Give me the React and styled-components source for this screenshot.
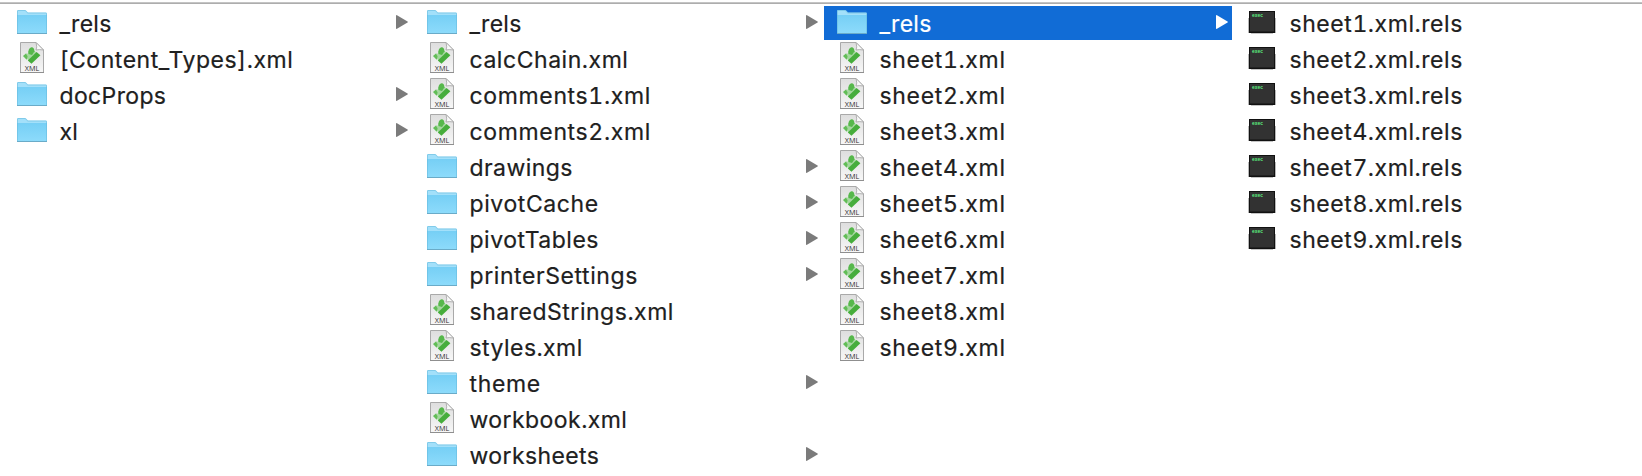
import React from "react";
import styled, { createGlobalStyle } from "styled-components";

const GlobalStyle = createGlobalStyle`
  body { margin: 0; background: #fff; overflow: hidden; }
`;

const Browser = styled.main`
  box-sizing: border-box;
  width: 1642px;
  height: 476px;
  padding: 2px 0 0;
  overflow: hidden;
  background: #fff;
  font-family: Inter, "Liberation Sans", sans-serif;
`;

const Definitions = styled.svg`
  display: block;
`;

const TopEdge = styled.div`
  height: 2px;
  background: linear-gradient(#c4c4c4 50%, #adadad 50%);
`;

const Columns = styled.div`
  display: flex;
  gap: 2px;
  padding: 2px 0 0 4px;
`;

const Column = styled.ul`
  display: flex;
  flex: 0 0 408px;
  flex-direction: column;
  gap: 2px;
  margin: 0;
  padding: 0;
  list-style: none;
`;

const Row = styled.li`
  box-sizing: border-box;
  display: flex;
  align-items: center;
  height: 34px;
  padding: 0 4px 0 13px;
  color: ${(p) => (p.$selected ? "#fff" : "#202020")};
  background: ${(p) => (p.$selected ? "#116cd6" : "transparent")};
`;

const Icon = styled.svg`
  flex: none;
  width: 30px;
  height: 34px;
  overflow: visible;
`;

const Name = styled.span`
  flex: 1;
  padding: 2px 0 0 12.5px;
  font-size: 23px;
  font-variant-numeric: tabular-nums;
  line-height: 34px;
  letter-spacing: ${(p) => p.$tracking}px;
  -webkit-text-stroke: 0.2px currentColor;
  white-space: nowrap;
`;

const Arrow = styled.svg`
  flex: none;
  width: 12px;
  height: 14px;
  margin-bottom: 2px;
  fill: ${(p) => (p.$selected ? "#fff" : "#7b7b7b")};
`;

const FolderIcon = () => (
  <Icon viewBox="0 0 30 34">
    <path d="M0 28V5.2Q0 4 1.2 4H8q.8 0 1.400.7L11 6.500h17.800Q30 6.500 30 7.700V28Z" fill="#a3e0fa" />
    <path d="M0 9h30v18.500H0Z" fill="url(#folderFace)" />
    <path d="M.5 28V5Q.5 4.500 1 4.500h7.200L10.800 7H29q.5 0 .5.5V28" fill="none" stroke="#66b9dd" strokeOpacity=".55" />
    <path d="M0 27.500h30" stroke="#6aabc8" />
  </Icon>
);

const XmlIcon = () => (
  <Icon viewBox="0 0 30 34">
    <path d="M3.500 .5H19l7.500 7.500v22.500h-23Z" fill="url(#paper)" stroke="#a9a9a9" />
    <path d="M3 30.500h24" stroke="#8f8f8f" />
    <path d="M19 .5q1.500 5 0 7.500 3-.8 7.500 0Z" fill="#fafafa" stroke="#a2a2a2" strokeWidth=".8" />
    <path d="m8.500 15 3-5 6-1 2.500 2-8 8Z" fill="#a5d79f" />
    <path d="m10.800 18.600 8.800-8.500 3.800 3.200-8.900 8.500Z" fill="#46ad3c" />
    <path d="M11.300 9.500q.8-3.900 3.200-4.200 2.600-.2 3 4l-2.500 3.600-3.500-.8Z" fill="#56b84b" />
    <path d="m6 14 3.200-2.800 1.400 3.600-1 3Z" fill="#62bd57" />
    <text x="15" y="28.600" textAnchor="middle" textLength="14.500" lengthAdjust="spacingAndGlyphs" fontFamily="Open Sans, sans-serif" fontSize="7.500" fill="#303030">XML</text>
  </Icon>
);

const TerminalIcon = () => (
  <Icon viewBox="0 0 30 34">
    <path d="M1 12h28v15H1Z" fill="#b8b8b8" />
    <path d="M4 27.500h22" stroke="#c4c4c4" />
    <path d="M2 5h26v22H2Z" fill="#111" />
    <path d="M3 6h24v19.500H3Z" fill="#323232" />
    <text x="5" y="11" textLength="11" lengthAdjust="spacingAndGlyphs" fontFamily="Liberation Mono, monospace" fontWeight="700" fontSize="5.500" fill="#5df080">exec</text>
  </Icon>
);

const icons = { folder: FolderIcon, xml: XmlIcon, exec: TerminalIcon };

const folder = (name, tracking = 0.3) => ({ name, tracking, kind: "folder" });
const xml = (name, tracking = 0.5) => ({ name, tracking, kind: "xml" });
const exec = (name, tracking = 0.56) => ({ name, tracking, kind: "exec" });

const columns = [
  [folder("_rels"), xml("[Content_Types].xml", 0.54), folder("docProps", 0.36), folder("xl")],
  [
    folder("_rels"), xml("calcChain.xml", 0.54), xml("comments1.xml", 0.65), xml("comments2.xml", 0.65),
    folder("drawings", 0.43), folder("pivotCache", 0.6), folder("pivotTables", 0.5), folder("printerSettings", 0.58),
    xml("sharedStrings.xml", 0.52), xml("styles.xml", 0.45), folder("theme", 0.65), xml("workbook.xml", 0.44), folder("worksheets", 0.4),
  ],
  [
    { ...folder("_rels"), selected: true },
    ...[1, 2, 3, 4, 5, 6, 7, 8, 9].map((n) => xml(`sheet${n}.xml`, 0.67)),
  ],
  [1, 2, 3, 4, 7, 8, 9].map((n) => exec(`sheet${n}.xml.rels`)),
];

function FileRow({ name, kind, tracking, selected }) {
  const Glyph = icons[kind];
  return (
    <Row $selected={selected}>
      <Glyph />
      <Name $tracking={tracking}>{name}</Name>
      {kind === "folder" && (
        <Arrow $selected={selected} viewBox="0 0 12 14">
          <path d="M0 0.800Q0-.3 1 .2l10.500 6.200q.8.600 0 1.200L1 13.800Q0 14.300 0 13.200Z" />
        </Arrow>
      )}
    </Row>
  );
}

export default function App() {
  return (
    <Browser>
      <GlobalStyle />
      <Definitions width="0" height="0" aria-hidden="true">
        <defs>
          <linearGradient id="folderFace" x2="0" y2="1">
            <stop stopColor="#76cff5" />
            <stop offset="1" stopColor="#8ddbfb" />
          </linearGradient>
          <linearGradient id="paper" x2="0" y2="1">
            <stop stopColor="#dedede" />
            <stop offset="1" stopColor="#f7f7f7" />
          </linearGradient>
        </defs>
      </Definitions>
      <TopEdge />
      <Columns>
        {columns.map((items, i) => (
          <Column key={i}>
            {items.map((item) => <FileRow key={item.name} {...item} />)}
          </Column>
        ))}
      </Columns>
    </Browser>
  );
}
